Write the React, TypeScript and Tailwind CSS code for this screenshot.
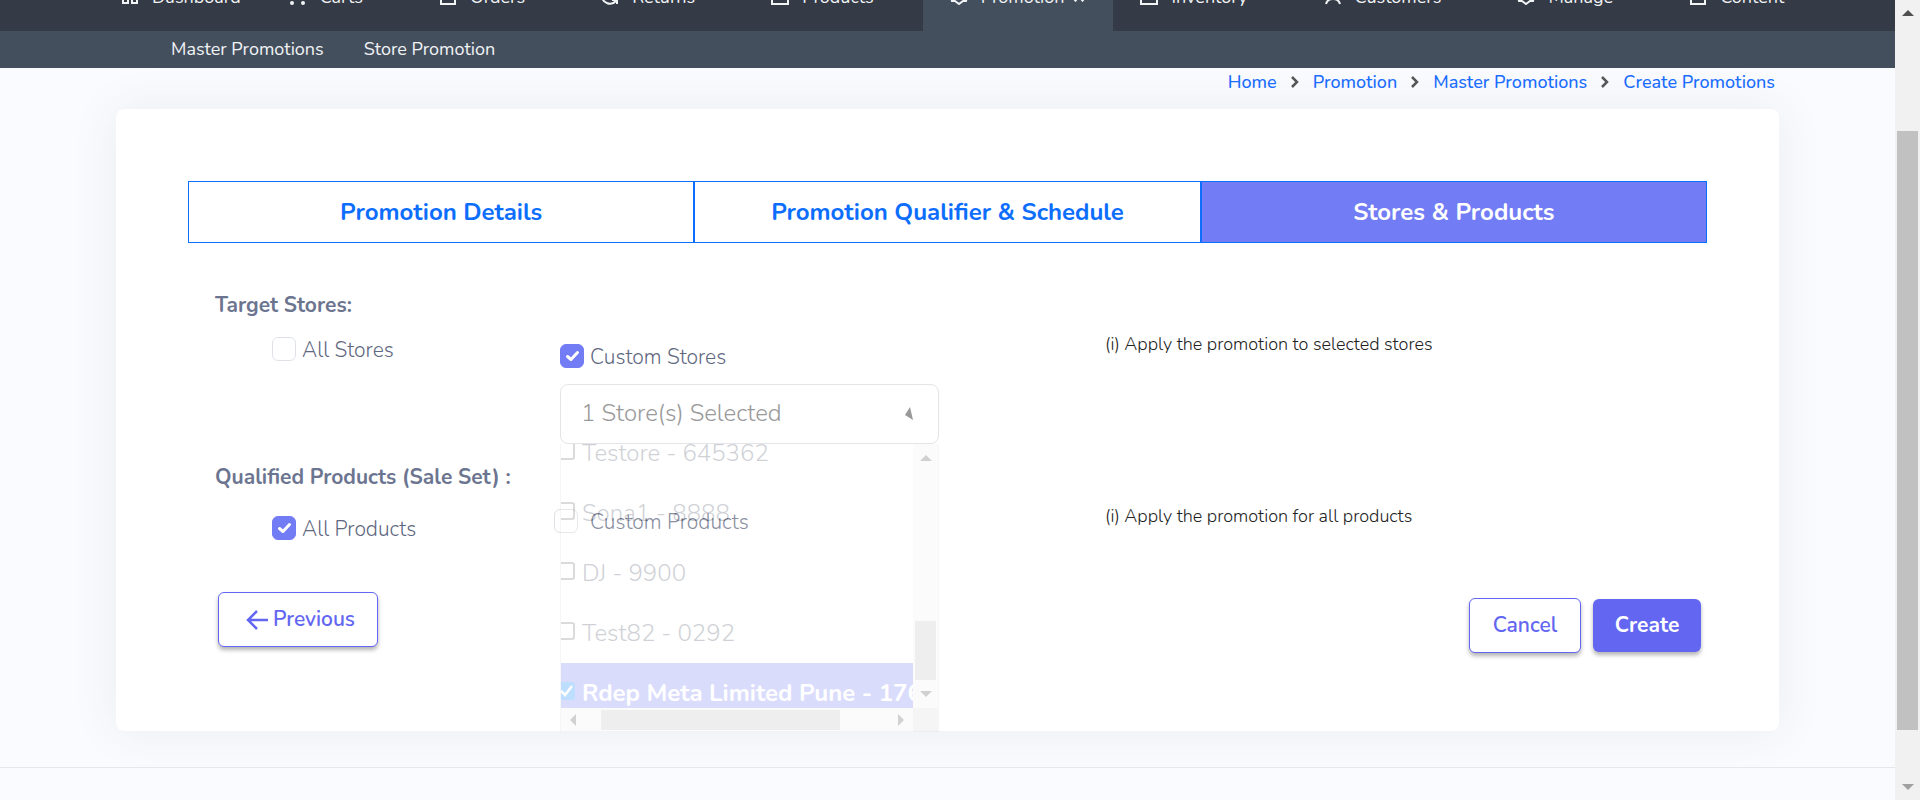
import React, { useState } from "react";
import type { ReactNode } from "react";

type NavItem = { label: string; icon: ReactNode; menu: boolean; active?: boolean };

function Icon({ children }: { children: ReactNode }) {
  return (
    <svg viewBox="0 0 18 18" className="size-[18px] shrink-0" fill="none" stroke="currentColor" strokeWidth="2" aria-hidden="true">
      {children}
    </svg>
  );
}

const boxIcon = (
  <Icon>
    <path d="M1 5h16v12H1zM5 5V1h8v4" />
  </Icon>
);
const pageIcon = (
  <Icon>
    <path d="M2 1h14v16H2z" />
  </Icon>
);
const badgeIcon = (
  <Icon>
    <path d="M9 1l3 2h4v5l1 2-1 4h-3l-4 3-4-3H2l-1-4 1-2V3h4z" />
  </Icon>
);

const navItems: NavItem[] = [
  { label: "Dashboard", menu: false, icon: <Icon><path d="M2 1h5v7H2zM11 1h5v4h-5zM2 12h5v4H2zM11 9h5v7h-5z" /></Icon> },
  { label: "Carts", menu: true, icon: <Icon><path d="M0 1h3l3 9h8l3-7H5" /><circle cx="3" cy="16" r="2" fill="currentColor" stroke="none" /><circle cx="14" cy="16" r="2" fill="currentColor" stroke="none" /></Icon> },
  { label: "Orders", menu: true, icon: pageIcon },
  { label: "Returns", menu: true, icon: <Icon><path d="M1 9a8 8 0 0 0 14 5M16 17v-4h-5M17 9A8 8 0 0 0 3 4" /></Icon> },
  { label: "Products", menu: true, icon: boxIcon },
  { label: "Promotion", menu: true, active: true, icon: badgeIcon },
  { label: "Inventory", menu: true, icon: boxIcon },
  { label: "Customers", menu: true, icon: <Icon><circle cx="9" cy="6" r="4" /><path d="M2 17c1-4 4-5 7-5s6 1 7 5" /></Icon> },
  { label: "Manage", menu: true, icon: badgeIcon },
  { label: "Content", menu: true, icon: pageIcon },
];

const crumbs = ["Home", "Promotion", "Master Promotions", "Create Promotions"];
const steps = ["Promotion Details", "Promotion Qualifier & Schedule", "Stores & Products"];
const stores = [
  { name: "Testore - 645362", selected: false },
  { name: "Sona1 - 8888", selected: false },
  { name: "DJ - 9900", selected: false },
  { name: "Test82 - 0292", selected: false },
  { name: "Rdep Meta Limited Pune - 1760", selected: true },
];

function Arrow({ direction }: { direction: "up" | "down" | "left" | "right" }) {
  const points = {
    up: "6,3 12,9 0,9",
    down: "0,3 12,3 6,9",
    left: "9,0 9,12 3,6",
    right: "3,0 9,6 3,12",
  };
  return (
    <svg viewBox="0 0 12 12" className="size-3 shrink-0" fill="currentColor" aria-hidden="true">
      <polygon points={points[direction]} />
    </svg>
  );
}

function Check({ id, label, initial, outset = false }: { id: string; label: string; initial: boolean; outset?: boolean }) {
  const [on, setOn] = useState(initial);
  return (
    <div className={outset ? "-ml-1.5 flex h-8 items-center gap-3" : "flex h-8 items-center gap-1.5"}>
      <span className="relative size-6 shrink-0">
        <input
          id={id}
          type="checkbox"
          checked={on}
          onChange={() => setOn(!on)}
          className="block size-6 appearance-none rounded-md border border-[#dee2e6] bg-white checked:border-[#727cf5] checked:bg-[#727cf5]"
        />
        {on && (
          <svg viewBox="0 0 24 24" className="pointer-events-none absolute inset-0 size-6" fill="none" stroke="white" strokeWidth="3" strokeLinecap="round" strokeLinejoin="round" aria-hidden="true">
            <path d="M7.500 12.500l3.500 3 6.500-7" />
          </svg>
        )}
      </span>
      <label htmlFor={id} className="pt-0.5 text-[21px] leading-8 font-light text-[#5f6880]">{label}</label>
    </div>
  );
}

function StoreOption({ name, selected }: { name: string; selected: boolean }) {
  const [on, setOn] = useState(selected);
  return (
    <li className={on ? "h-[60px] bg-[#727cf5] text-white" : "h-[60px] text-[#4b5365]"}>
      <label className="flex h-full items-center gap-[7px] text-2xl whitespace-nowrap">
        <span className="relative mb-1 -ml-1 size-[18px] shrink-0">
          <input
            type="checkbox"
            checked={on}
            onChange={() => setOn(!on)}
            className="block size-[18px] appearance-none rounded-[3px] border-2 border-[#767676] bg-white checked:border-[#0a84ff] checked:bg-[#0a84ff]"
          />
          {on && (
            <svg viewBox="0 0 18 18" className="pointer-events-none absolute inset-0 size-[18px]" fill="none" stroke="white" strokeWidth="2.500" aria-hidden="true">
              <path d="M4 9l4 4 7-9" />
            </svg>
          )}
        </span>
        <span className={on ? "font-bold" : "font-light"}>{name}</span>
      </label>
    </li>
  );
}

function StorePicker() {
  return (
    <div className="relative mt-3 w-full max-w-[379px]">
      <button type="button" aria-expanded="true" className="flex h-[60px] w-full items-center justify-between rounded-lg border border-[#e3e5e8] bg-white pr-6 pb-0.5 pl-5 text-2xl font-light text-[#9a9a9a]">
        <span>1 Store(s) Selected</span>
        <svg viewBox="0 0 10 14" className="h-3.5 w-2.5" fill="#999999" aria-hidden="true">
          <polygon points="6,1 9,14 1,9" />
        </svg>
      </button>
      <div className="absolute top-full left-0 z-10 w-full border-x border-[#dddddd] bg-white opacity-[0.26]">
        <div className="flex h-[264px]">
          <ul className="min-w-0 flex-1 overflow-hidden">
            <li aria-hidden="true" className="-mt-[21px]" />
            {stores.map((store) => (
              <StoreOption key={store.name} name={store.name} selected={store.selected} />
            ))}
          </ul>
          <div className="flex w-[25px] flex-col items-center bg-[#f1f1f1] py-2 text-[#505050]">
            <Arrow direction="up" />
            <div className="mt-auto mb-2 h-[59px] w-[21px] bg-[#c1c1c1]" />
            <Arrow direction="down" />
          </div>
        </div>
        <div className="flex h-6 bg-[#dcdcdc]">
          <div className="flex flex-1 items-center bg-[#f1f1f1] px-1.5 text-[#505050]">
            <Arrow direction="left" />
            <div className="ml-[22px] h-5 w-[239px] bg-[#c1c1c1]" />
            <span className="ml-auto flex"><Arrow direction="right" /></span>
          </div>
          <div className="w-[25px]" />
        </div>
      </div>
    </div>
  );
}

export default function App() {
  return (
    <div className="flex min-h-screen bg-[#fafbfe] font-['Nunito','Lato',sans-serif]">
      <div className="min-w-0 flex-1">
        <header className="relative z-10 text-[#f1f3f5]">
          <nav aria-label="Main" className="h-[31px] overflow-hidden bg-[#343a46]">
            <ul className="flex h-full items-end pl-[94px]">
              {navItems.map((item) => (
                <li key={item.label} className={item.active ? "bg-[#444f5e]" : ""}>
                  <a href="#" className={item.menu ? "flex items-center gap-[13px] px-[27px] pb-[22px] text-lg leading-6" : "flex items-center gap-[13px] pr-[21px] pb-[22px] pl-[27px] text-lg leading-6"}>
                    <span className="pb-0.5">{item.icon}</span>
                    <span className="flex items-center gap-2">
                      {item.label}
                      {item.menu && (
                        <svg viewBox="0 0 14 10" className={item.active ? "w-3.5" : "invisible w-3.5"} fill="none" stroke="currentColor" strokeWidth="1.500" aria-hidden="true">
                          <path d="M1 6l2.500 3L6 6M8 6l2.500 3L13 6" />
                        </svg>
                      )}
                    </span>
                  </a>
                </li>
              ))}
            </ul>
          </nav>
          <nav aria-label="Promotion" className="flex h-[37px] items-center gap-10 bg-[#444f5e] pb-0.5 pl-[171px] text-lg">
            <a href="#">Master Promotions</a>
            <a href="#">Store Promotion</a>
          </nav>
        </header>

        <main className="px-[116px]">
          <nav aria-label="Breadcrumb" className="flex h-[41px] justify-end pr-1">
            <ol className="flex h-7 items-center text-lg font-medium text-[#1a6dff]">
              {crumbs.map((crumb, index) => (
                <li key={crumb} className="flex items-center">
                  {index > 0 && (
                    <svg viewBox="0 0 8 12" className="mx-3.5 h-3 w-2" fill="none" stroke="#555555" strokeWidth="2.500" aria-hidden="true">
                      <path d="M1 1l5 5-5 5" />
                    </svg>
                  )}
                  <a href="#">{crumb}</a>
                </li>
              ))}
            </ol>
          </nav>

          <form className="rounded-lg bg-white px-[72px] pt-[72px] pb-[78px] shadow-[0_0_48px_rgba(60,65,90,0.08)]" onSubmit={(event) => event.preventDefault()}>
            <div className="grid grid-cols-3 text-2xl font-bold">
              {steps.map((step, index) => (
                <button
                  key={step}
                  type="button"
                  className={index === 2 ? "h-[62px] border border-[#0d6efd] bg-[#727cf5] text-white" : "h-[62px] border border-[#0d6efd] bg-white text-[#0d6efd]"}
                >
                  {step}
                </button>
              ))}
            </div>

            <div className="pt-[46px] pr-1.5 pl-[27px]">
              <h2 className="text-[21px] leading-8 font-bold text-[#6c7590]">Target Stores:</h2>
              <div className="grid grid-cols-[345fr_545fr_596fr]">
                <div className="pt-3 pl-[57px]">
                  <Check id="all-stores" label="All Stores" initial={false} />
                </div>
                <div className="pt-[19px]">
                  <Check id="custom-stores" label="Custom Stores" initial={true} />
                  <StorePicker />
                </div>
                <p className="pt-[11px] text-lg leading-6 font-light text-[#222222]">(i) Apply the promotion to selected stores</p>
              </div>

              <h2 className="mt-[17px] text-[21px] leading-8 font-bold text-[#6c7590]">Qualified Products (Sale Set) :</h2>
              <div className="grid grid-cols-[345fr_545fr_596fr]">
                <div className="pt-[19px] pl-[57px]">
                  <Check id="all-products" label="All Products" initial={true} />
                </div>
                <div className="pt-3">
                  <Check id="custom-products" label="Custom Products" initial={false} outset />
                </div>
                <p className="pt-[11px] text-lg leading-6 font-light text-[#222222]">(i) Apply the promotion for all products</p>
              </div>

              <div className="mt-12 flex items-start justify-between text-[21px] font-semibold">
                <button type="button" className="ml-[3px] flex h-[55px] w-40 items-center justify-center gap-1 rounded-md border border-[#6366f1] bg-white pl-1 text-[#6366f1] shadow-[0_3px_4px_rgba(0,0,0,0.3)]">
                  <svg viewBox="0 0 24 24" className="size-6" fill="none" stroke="currentColor" strokeWidth="2.500" aria-hidden="true">
                    <path d="M23 12H3M12 3l-9 9 9 9" />
                  </svg>
                  Previous
                </button>
                <div className="flex items-center gap-3 pt-1.5">
                  <button type="button" className="h-[55px] w-28 rounded-md border border-[#6366f1] bg-white text-[#6366f1] shadow-[0_3px_4px_rgba(0,0,0,0.3)]">Cancel</button>
                  <button type="submit" className="h-[53px] w-[108px] rounded-md bg-[#6366f1] font-bold text-white shadow-[0_3px_4px_rgba(0,0,0,0.3)]">Create</button>
                </div>
              </div>
            </div>
          </form>
        </main>
        <footer className="mt-9 border-t border-[#e5e7ec]" />
      </div>

      <div className="flex w-[25px] shrink-0 flex-col items-center bg-[#f1f1f1] py-[7px] text-[#505050]" aria-hidden="true">
        <Arrow direction="up" />
        <div className="mt-28 mb-[51px] w-[21px] flex-1 bg-[#c1c1c1]" />
        <span className="flex text-[#a0a0a0]"><Arrow direction="down" /></span>
      </div>
    </div>
  );
}
